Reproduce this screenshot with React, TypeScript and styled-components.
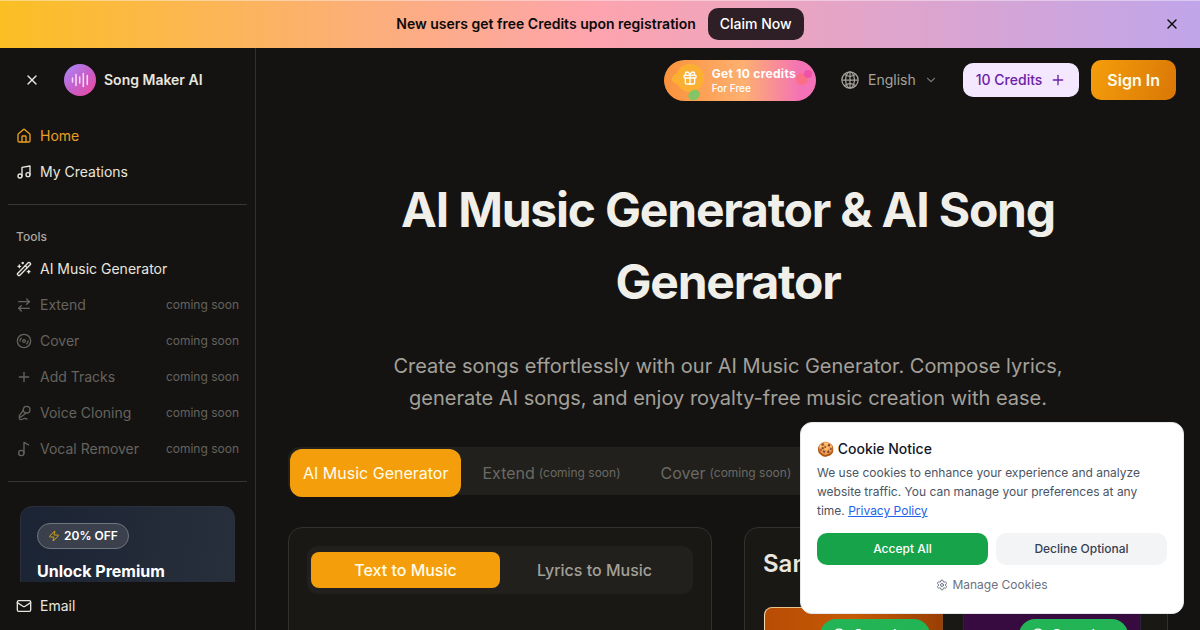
import React from "react";
import styled, { createGlobalStyle, css } from "styled-components";
import {
  House, Music2, WandSparkles, ArrowRightLeft, Disc3, Plus, MicVocal, Music, Mail, X,
  Zap, Gift, ChevronDown, Settings, CirclePlay,
} from "lucide-react";
import { IoGlobeOutline } from "react-icons/io5";

const GlobalStyle = createGlobalStyle`
  *, *::before, *::after { box-sizing: border-box; }
  html, body { margin: 0; background: #141311; }
  body {
    font-family: Inter, "Liberation Sans", sans-serif;
    font-size: 14px;
    line-height: 20px;
    color: #e9e6df;
    overflow: hidden;
  }
  button { font: inherit; border: 0; cursor: pointer; }
  a { color: inherit; text-decoration: none; }
  h1, h2, h3, p { margin: 0; }
`;

const Shell = styled.div`
  display: flex;
  flex-direction: column;
  height: 100vh;
`;

const Banner = styled.div`
  display: grid;
  grid-template-columns: 1fr auto 1fr;
  align-items: center;
  flex: none;
  height: 48px;
  padding: 0 16px;
  box-shadow: inset 0 1px rgba(255, 255, 255, 0.4);
  background: linear-gradient(90deg, #fbbf24, #fda4af 50%, #c0a5ea);
  color: #0c0a09;
`;

const BannerOffer = styled.div`
  display: flex;
  grid-column: 2;
  align-items: center;
  gap: 12px;
  font-weight: 600;
`;

const ClaimButton = styled.button`
  height: 32px;
  padding: 0 12px;
  border-radius: 10px;
  background: #2e1e25;
  color: #fff;
  font-weight: 500;
`;

const IconButton = styled.button`
  display: flex;
  align-items: center;
  justify-content: center;
  width: 24px;
  height: 24px;
  padding: 0;
  justify-self: end;
  background: transparent;
  color: inherit;
`;

const Body = styled.div`
  display: flex;
  flex: 1;
  min-height: 0;
`;

const Sidebar = styled.aside`
  display: flex;
  flex-direction: column;
  flex: none;
  width: 256px;
  border-right: 1px solid #33312e;
`;

const Brand = styled.div`
  display: flex;
  align-items: center;
  flex: none;
  height: 64px;
  gap: 20px;
  padding: 0 20px;
`;

const BrandLink = styled.a`
  display: flex;
  align-items: center;
  gap: 8px;
  font-weight: 600;
`;

const SideScroll = styled.div`
  flex: 1;
  min-height: 0;
  overflow: hidden;
`;

const SideNav = styled.nav`
  display: flex;
  flex-direction: column;
  gap: 4px;
  padding: 8px;
`;

const SideLabel = styled.div`
  margin-bottom: -4px;
  padding: 0 8px;
  color: #aaa7a1;
  font-size: 12px;
  font-weight: 500;
  line-height: 32px;
`;

const SideItem = styled.a<{ $state?: "active" | "soon" }>`
  display: flex;
  align-items: center;
  gap: 8px;
  height: 32px;
  padding: 0 8px;
  color: ${(p) => (p.$state === "active" ? "#e8a020" : p.$state === "soon" ? "#65635f" : "#e9e6df")};
`;

const Soon = styled.span`
  margin-left: auto;
  font-size: 12px;
`;

const Rule = styled.hr`
  height: 1px;
  margin: 8px;
  border: 0;
  background: #383632;
`;

const Promo = styled.section`
  margin: 24px 20px;
  padding: 16px;
  height: 180px;
  border: 1px solid #2a313d;
  border-radius: 12px;
  background: linear-gradient(100deg, #1b2434, #29303c);
  color: #fff;
`;

const Discount = styled.span`
  display: inline-flex;
  align-items: center;
  gap: 4px;
  height: 26px;
  padding: 0 10px;
  border: 1px solid #70757e;
  border-radius: 13px;
  background: #3a414d;
  font-size: 12px;
  font-weight: 600;
`;

const PromoTitle = styled.h3`
  margin-top: 10px;
  font-size: 16px;
  font-weight: 700;
  line-height: 24px;
`;

const SideFooter = styled.div`
  flex: none;
  padding: 8px;
`;

const Content = styled.div`
  flex: 1;
  min-width: 0;
  overflow: hidden;
`;

const TopBar = styled.header`
  display: flex;
  align-items: center;
  justify-content: flex-end;
  height: 64px;
  padding: 0 24px;
`;

const CreditOffer = styled.button`
  position: relative;
  display: flex;
  align-items: center;
  gap: 8px;
  height: 41px;
  margin-right: 24px;
  padding: 0 20px 0 12px;
  overflow: hidden;
  border-radius: 21px;
  background: linear-gradient(90deg, #fb923c, #fdb070 52%, #f472b6 90%);
  color: #fff;
  text-align: left;
`;

const OfferArt = styled.svg`
  position: absolute;
  inset: 0;
`;

const GiftSlot = styled.span`
  position: relative;
  display: flex;
  justify-content: center;
  width: 28px;
  padding-bottom: 4px;
`;

const OfferText = styled.span`
  position: relative;
  display: flex;
  flex-direction: column;
  padding-top: 2px;
  font-size: 10px;
  font-weight: 500;
  line-height: 15px;
`;

const OfferTitle = styled.strong`
  font-size: 12px;
  font-weight: 700;
  letter-spacing: 0.025em;
`;

const Language = styled.button`
  display: flex;
  align-items: center;
  gap: 8px;
  margin-right: 25px;
  padding: 0;
  background: transparent;
  color: #a5a29d;
`;

const Credits = styled.button`
  display: flex;
  align-items: center;
  gap: 8px;
  height: 34px;
  margin-right: 12px;
  padding: 0 13px;
  border-radius: 10px;
  background: #f3e8ff;
  color: #6b21a8;
  font-weight: 500;
`;

const SignIn = styled.button`
  height: 40px;
  padding: 0 16px;
  border-radius: 10px;
  background: linear-gradient(110deg, #f59e0b, #d97706);
  color: #fefce8;
  font-size: 16px;
  font-weight: 600;
`;

const Main = styled.main`
  padding: 62px 32px 0;
`;

const Title = styled.h1`
  max-width: 768px;
  margin: 0 auto;
  color: #f0efe9;
  font-size: 48px;
  font-weight: 700;
  letter-spacing: -0.025em;
  line-height: 72px;
  text-align: center;
`;

const Lead = styled.p`
  max-width: 704px;
  margin: 32px auto 0;
  color: #a3a09a;
  font-size: 20px;
  line-height: 32px;
  text-align: center;
`;

const ToolTabs = styled.div`
  display: flex;
  gap: 2px;
  height: 48px;
  margin: 33px 0 32px;
  padding: 2px;
  border-radius: 12px;
  background: #21201c;
`;

const ToolTab = styled.button<{ $active?: boolean }>`
  display: flex;
  align-items: center;
  gap: 4px;
  height: 48px;
  padding: 0 ${(p) => (p.$active ? "13px" : "19px")};
  border-radius: 12px;
  background: ${(p) => (p.$active ? "#f59e0b" : "transparent")};
  color: ${(p) => (p.$active ? "#fefce8" : "#6b6964")};
  font-size: 16px;
  white-space: nowrap;
  small { font-size: 12px; }
`;

const Panels = styled.div`
  display: grid;
  grid-template-columns: 1fr 1fr;
  gap: 32px;
`;

const Panel = styled.section`
  min-height: 400px;
  padding: 18px;
  border: 1px solid #33312e;
  border-radius: 14px;
  background: #191815;
`;

const ModeTabs = styled.div`
  display: grid;
  grid-template-columns: 1fr 1fr;
  padding: 6px 4px;
  border-radius: 10px;
  background: #21201c;
`;

const ModeTab = styled.button<{ $active?: boolean }>`
  height: 36px;
  border-radius: 8px;
  background: transparent;
  color: #a3a09a;
  font-size: 16px;
  font-weight: 500;
  ${(p) => p.$active && css`
    background: #f59e0b;
    color: #fefce8;
  `}
`;

const PanelTitle = styled.h2`
  color: #e9e6df;
  font-size: 24px;
  font-weight: 600;
  line-height: 36px;
`;

const Samples = styled.div`
  display: grid;
  grid-template-columns: 1fr 1fr;
  gap: 20px;
  margin: 25px 8px 0 1px;
`;

const Sample = styled.article<{ $tone: "amber" | "violet" }>`
  display: flex;
  align-items: flex-start;
  justify-content: flex-end;
  height: 180px;
  padding: 11px 12px;
  border: 1px solid ${(p) => (p.$tone === "amber" ? "#8a4a1c" : "#2b2130")};
  border-top-color: ${(p) => (p.$tone === "amber" ? "#e8c48c" : "#2b2130")};
  border-left-color: ${(p) => (p.$tone === "amber" ? "#f3dcb4" : "#2b2130")};
  border-radius: 8px;
  background: ${(p) => (p.$tone === "amber"
    ? "linear-gradient(90deg, #b84c04, #c65a05 50%, #993f05)"
    : "#370a40")};
`;

const SampleButton = styled.button`
  display: flex;
  align-items: center;
  gap: 7px;
  height: 32px;
  padding: 0 12px;
  border-radius: 16px;
  background: #22b455;
  color: #fff;
  font-size: 14px;
  font-weight: 500;
`;

const Cookie = styled.aside`
  position: fixed;
  right: 16px;
  bottom: 16px;
  display: flex;
  flex-direction: column;
  width: 384px;
  padding: 16px;
  border: 1px solid #e5e7eb;
  border-radius: 12px;
  background: #fff;
  color: #4b5563;
  font-size: 12px;
`;

const CookieTitle = styled.h2`
  color: #111827;
  font-size: 14px;
  font-weight: 500;
  line-height: 20px;
`;

const CookieText = styled.p`
  margin: 4px 0 13px;
  line-height: 19px;
  a { color: #2563eb; text-decoration: underline; }
`;

const Choices = styled.div`
  display: grid;
  grid-template-columns: 1fr 1fr;
  gap: 8px;
`;

const Choice = styled.button<{ $primary?: boolean }>`
  height: 32px;
  border-radius: 10px;
  background: ${(p) => (p.$primary ? "#16a34a" : "#f3f4f6")};
  color: ${(p) => (p.$primary ? "#fff" : "#374151")};
  font-weight: 500;
`;

const Manage = styled.button`
  display: flex;
  align-items: center;
  justify-content: center;
  gap: 4px;
  height: 24px;
  margin-top: 8px;
  background: transparent;
  color: #6b7280;
`;

const BrandMark = () => (
  <svg width="32" height="32" viewBox="0 0 32 32" aria-hidden="true">
    <defs>
      <linearGradient id="brand" x1="0" y1="0" x2="1" y2="1">
        <stop stopColor="#a78bfa" />
        <stop offset="0.5" stopColor="#c660cc" />
        <stop offset="1" stopColor="#ec4899" />
      </linearGradient>
    </defs>
    <circle cx="16" cy="16" r="16" fill="url(#brand)" />
    <path d="M8.5 14v4M12 10.5v11M15.7 13v6M19.3 9.5v13M23.3 11.5v9" stroke="#f8dcf7" strokeWidth="1.5" strokeLinecap="round" />
  </svg>
);

const soonTools = [
  { name: "Extend", icon: ArrowRightLeft },
  { name: "Cover", icon: Disc3 },
  { name: "Add Tracks", icon: Plus },
  { name: "Voice Cloning", icon: MicVocal },
  { name: "Vocal Remover", icon: Music2 },
];

export default function App() {
  return (
    <Shell>
      <GlobalStyle />
      <Banner>
        <BannerOffer>
          New users get free Credits upon registration
          <ClaimButton>Claim Now</ClaimButton>
        </BannerOffer>
        <IconButton aria-label="Dismiss offer"><X size={16} /></IconButton>
      </Banner>
      <Body>
        <Sidebar>
          <Brand>
            <IconButton aria-label="Close menu"><X size={16} /></IconButton>
            <BrandLink href="#"><BrandMark />Song Maker AI</BrandLink>
          </Brand>
          <SideScroll>
            <SideNav>
              <SideItem href="#" $state="active"><House size={16} />Home</SideItem>
              <SideItem href="#"><Music size={16} />My Creations</SideItem>
            </SideNav>
            <Rule />
            <SideNav>
              <SideLabel>Tools</SideLabel>
              <SideItem href="#"><WandSparkles size={16} />AI Music Generator</SideItem>
              {soonTools.map(({ name, icon: Icon }) => (
                <SideItem href="#" key={name} $state="soon">
                  <Icon size={16} />{name}<Soon>coming soon</Soon>
                </SideItem>
              ))}
            </SideNav>
            <Rule />
            <Promo>
              <Discount><Zap size={12} color="#d6a514" />20% OFF</Discount>
              <PromoTitle>Unlock Premium</PromoTitle>
            </Promo>
          </SideScroll>
          <SideFooter>
            <SideItem href="#"><Mail size={16} />Email</SideItem>
          </SideFooter>
        </Sidebar>
        <Content>
          <TopBar>
            <CreditOffer>
              <OfferArt width="152" height="41" viewBox="0 0 152 41" aria-hidden="true">
                <circle cx="13" cy="19" r="5" fill="#fbb034" />
                <circle cx="26" cy="18" r="14" fill="#fbb034" />
                <ellipse cx="30" cy="35" rx="6" ry="5" transform="rotate(-35 30 35)" fill="#83c464" />
                <circle cx="138" cy="19" r="6" fill="#fb6f86" />
                <circle cx="144" cy="14" r="4" fill="#f052a8" />
              </OfferArt>
              <GiftSlot><Gift size={16} /></GiftSlot>
              <OfferText><OfferTitle>Get 10 credits</OfferTitle>For Free</OfferText>
            </CreditOffer>
            <Language><IoGlobeOutline size={20} />English<ChevronDown size={14} color="#75726d" /></Language>
            <Credits>10 Credits<Plus size={16} /></Credits>
            <SignIn>Sign In</SignIn>
          </TopBar>
          <Main>
            <Title>AI Music Generator &amp; AI Song Generator</Title>
            <Lead>
              Create songs effortlessly with our AI Music Generator. Compose lyrics, generate AI
              songs, and enjoy royalty-free music creation with ease.
            </Lead>
            <ToolTabs>
              <ToolTab $active>AI Music Generator</ToolTab>
              <ToolTab>Extend <small>(coming soon)</small></ToolTab>
              <ToolTab>Cover <small>(coming soon)</small></ToolTab>
            </ToolTabs>
            <Panels>
              <Panel>
                <ModeTabs>
                  <ModeTab $active>Text to Music</ModeTab>
                  <ModeTab>Lyrics to Music</ModeTab>
                </ModeTabs>
              </Panel>
              <Panel>
                <PanelTitle>Sample Music</PanelTitle>
                <Samples>
                  <Sample $tone="amber"><SampleButton><CirclePlay size={14} />Complete</SampleButton></Sample>
                  <Sample $tone="violet"><SampleButton><CirclePlay size={14} />Complete</SampleButton></Sample>
                </Samples>
              </Panel>
            </Panels>
          </Main>
        </Content>
      </Body>
      <Cookie aria-label="Cookie notice">
        <CookieTitle>🍪 Cookie Notice</CookieTitle>
        <CookieText>
          We use cookies to enhance your experience and analyze website traffic. You can manage
          your preferences at any time. <a href="#">Privacy Policy</a>
        </CookieText>
        <Choices>
          <Choice $primary>Accept All</Choice>
          <Choice>Decline Optional</Choice>
        </Choices>
        <Manage><Settings size={12} />Manage Cookies</Manage>
      </Cookie>
    </Shell>
  );
}
